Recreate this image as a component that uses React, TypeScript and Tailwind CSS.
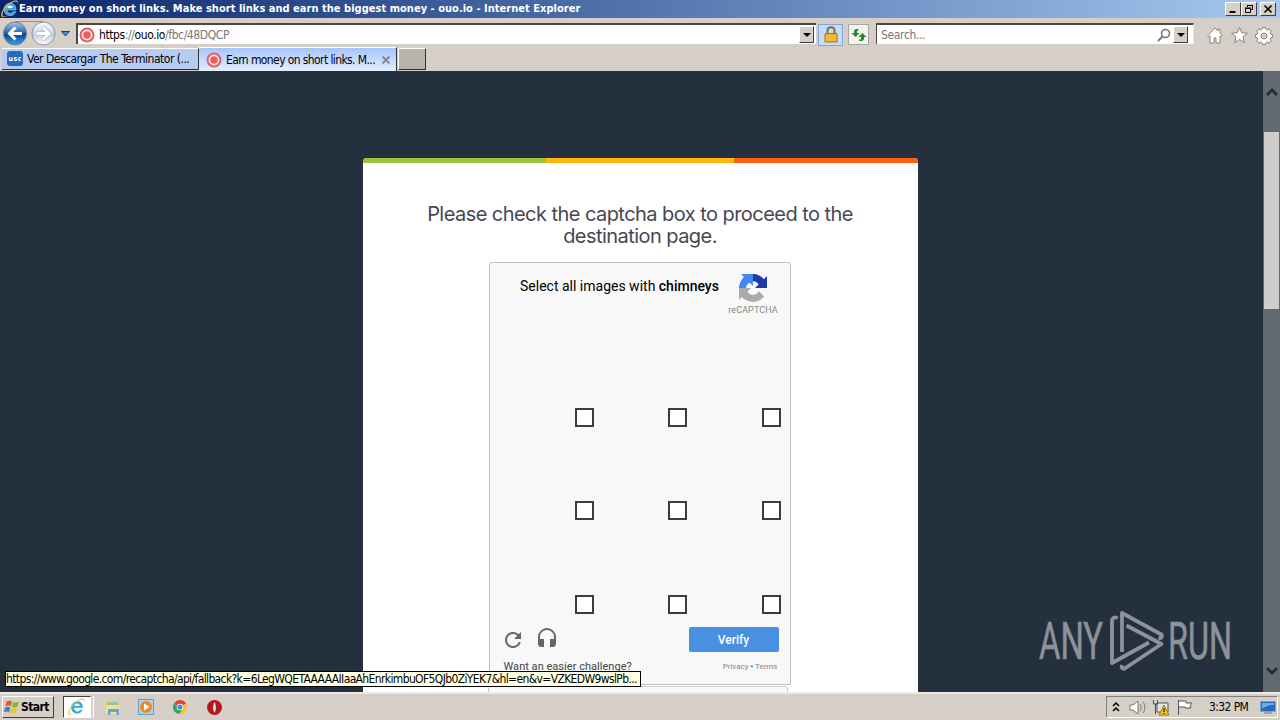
import type { ReactNode } from 'react';
import { MdHeadset, MdRefresh } from 'react-icons/md';

const cells = [1, 2, 3, 4, 5, 6, 7, 8, 9];

function IeLogo({ className }: { className?: string }) {
  return (
    <svg viewBox="0 0 20 20" className={className}>
      <path d="M16.6 11.2H6.8c.2 4 4.8 4.8 6.4 1.8h3.1c-1.2 3.3-3.5 4.4-6 4.4-4 0-6.9-2.8-6.9-6.8 0-4.2 3-7 6.8-7 4.2 0 6.8 3 6.4 7.6z" fill="#35a5e8" stroke="#d7f1ff" strokeWidth=".5" />
      <path d="M7 8.8h6.2c-.3-3.4-5.8-3.6-6.2 0z" fill="#eaf6ff" />
      <path d="M2.6 18.4C-.4 16 4 8.200 10.500 4c4.500-3 9-3.400 7.500 1.600 3-6.800-3.500-5.600-8.800-2C2.500 8-1.800 17 1.200 18.700c2 1.100 4.600-.4 6.200-1.500-2 .9-3.700 1.600-4.800 1.200z" fill="#f2c62b" />
    </svg>
  );
}

function OuoIcon() {
  return (
    <svg viewBox="0 0 16 16" className="h-4 w-4 shrink-0">
      <circle cx="8" cy="8" r="7.500" fill="#e95f63" />
      <circle cx="8" cy="8" r="4.600" fill="none" stroke="#fbe9e9" strokeWidth="1.700" />
    </svg>
  );
}

function WindowButton({ children }: { children: ReactNode }) {
  return (
    <button type="button" className="flex h-[14px] w-4 items-center justify-center border border-t-white border-r-[#404040] border-b-[#404040] border-l-white bg-[#d4d0c8]">
      <svg viewBox="0 0 12 12" className="h-3 w-3 shrink-0" fill="none" stroke="#000">
        {children}
      </svg>
    </button>
  );
}

function DropButton() {
  return (
    <button type="button" className="flex h-[17px] w-[15px] shrink-0 items-center justify-center border border-t-white border-r-[#404040] border-b-[#404040] border-l-white bg-[#d4d0c8]">
      <svg viewBox="0 0 8 4" className="h-1 w-2"><path d="M0 0h8L4 4z" /></svg>
    </button>
  );
}

function TitleBar() {
  return (
    <div className="flex h-[18px] items-center bg-linear-to-r from-[#0a246a] to-[#a6caf0] pr-1 pl-px">
      <IeLogo className="h-[18px] w-[18px]" />
      <span className="text-[11px] leading-[18px] font-bold tracking-[0.025px] whitespace-nowrap text-white">
        Earn money on short links. Make short links and earn the biggest money - ouo.io - Internet Explorer
      </span>
      <div className="ml-auto flex">
        <WindowButton><path d="M2.500 9h6" strokeWidth="2" /></WindowButton>
        <WindowButton>
          <path d="M4.500 4V2.500h5v4H8M4 2.500h6" />
          <path d="M2.500 5.500h5v4h-5zM2 5h6" />
        </WindowButton>
        <div className="ml-[3px]">
          <WindowButton><path d="M2.500 2.500l7 7M9.500 2.500l-7 7" strokeWidth="1.600" /></WindowButton>
        </div>
      </div>
    </div>
  );
}

function Toolbar() {
  return (
    <div className="flex h-[29px] items-center bg-[#d6cfc7]">
      <svg viewBox="0 0 75 29" className="h-[29px] w-[75px] shrink-0">
        <defs>
          <linearGradient id="back" x1="0" y1="0" x2="0" y2="1">
            <stop offset="0" stopColor="#a9c8ec" />
            <stop offset=".45" stopColor="#2c68b4" />
            <stop offset=".55" stopColor="#0d4597" />
            <stop offset="1" stopColor="#36a5ee" />
          </linearGradient>
          <linearGradient id="forward" x1="0" y1="0" x2="0" y2="1">
            <stop offset="0" stopColor="#fafcfe" />
            <stop offset=".55" stopColor="#c5d0dc" />
            <stop offset="1" stopColor="#fafcfe" />
          </linearGradient>
        </defs>
        <path d="M15 3.500h28" stroke="#9b9690" />
        <circle cx="15" cy="15.500" r="11.500" fill="url(#back)" stroke="#6f7f98" />
        <circle cx="43.500" cy="15.500" r="11.500" fill="url(#forward)" stroke="#8e949b" />
        <path d="M22 15.500H10M15.500 9.500l-6 6 6 6" fill="none" stroke="#fff" strokeWidth="3" />
        <path d="M36.500 15.500h12M43 9.500l6 6-6 6" fill="none" stroke="#a0a8b1" strokeWidth="4" />
        <path d="M36.500 15.500h12M43 9.500l6 6-6 6" fill="none" stroke="#fff" strokeWidth="3" />
        <path d="M61.500 13.500h8l-4 4.500z" fill="#4991cb" stroke="#173f72" />
      </svg>
      <div className="mt-0.5 ml-px flex h-[21px] w-[740px] shrink-0 items-center border-t-2 border-l-2 border-t-[#4b4642] border-l-[#4b4642] bg-white pl-px">
        <OuoIcon />
        <span className="ml-1 text-[12px] leading-4 tracking-[-0.4px] whitespace-nowrap text-[#777]">
          <span className="text-black">https</span>://<span className="text-black">ouo.io</span>/fbc/48DQCP
        </span>
        <div className="mr-0.5 ml-auto"><DropButton /></div>
      </div>
      <div className="mt-1 ml-0.5 flex h-[22px] w-[25px] shrink-0 items-center justify-center border border-[#7ea9dd] bg-[#c5dbf7]">
        <svg viewBox="0 0 14 17" className="h-[17px] w-[14px]">
          <path d="M3.500 8V4.500c0-4.500 7-4.500 7 0V8" fill="none" stroke="#807247" strokeWidth="2" />
          <path d="M1 7.500h12V16H1z" fill="#e9a91b" stroke="#b1790f" />
          <path d="M2 10h10M2 12h10M2 14h10" stroke="#f8d464" strokeWidth=".8" />
        </svg>
      </div>
      <div className="mt-1 ml-[5px] flex h-[21px] w-[21px] shrink-0 items-center justify-center border border-[#a8a6a2] bg-[#f2f3f1]">
        <svg viewBox="0 0 16 14" className="h-[14px] w-4 shrink-0" fill="#238a2a">
          <path d="M7.500 1v1.500H6V5h2.500L4.500 9 .5 5H3V3.500C3 2 4 1 5.500 1z" />
          <path d="M8 13v-1.500h2V9H7.500l4-4 4 4H13v1.500c0 1.500-1 2.500-2.500 2.500z" />
        </svg>
      </div>
      <div className="mt-0.5 ml-[7px] flex h-[21px] w-[318px] shrink-0 items-center border-t-2 border-r border-l border-t-[#4b4642] border-r-[#e8e4df] border-l-[#4b4642] bg-white pl-1">
        <span className="text-[12px] leading-4 tracking-[-0.35px] text-[#777]">Search...</span>
        <svg viewBox="0 0 14 14" className="mr-0.5 ml-auto h-[14px] w-[14px]" fill="none" stroke="#777">
          <circle cx="8.500" cy="5.500" r="4" strokeWidth="1.600" />
          <path d="M5.500 8.500L1 13" strokeWidth="2" />
        </svg>
        <div className="mr-[5px]"><DropButton /></div>
      </div>
      <svg viewBox="0 0 70 20" className="mt-1.5 ml-[13px] h-5 w-[70px] shrink-0" fill="#fff" stroke="#898581">
        <path d="M.8 9.500L8 2l3 3V3h2v4l2.500 2.500-1.300 1.200-1.200-1V17h-4v-5H7v5H3V9.700l-1 1z" />
        <path d="M32.500 1.500l2.200 5.200 5.600.5-4.300 3.700 1.300 5.600-4.800-3-4.800 3 1.300-5.600-4.300-3.700 5.600-.5z" />
        <path fillRule="evenodd" d="M55.500 1.500h3l.5 2 1.300.5 1.800-1.100 2.100 2.100-1.100 1.800.5 1.300 2 .5v2.800l-2 .5-.5 1.300 1.100 1.800-2.100 2.100-1.800-1.100-1.300.5-.5 2h-3l-.5-2-1.300-.5-1.800 1.100-2.100-2.100 1.100-1.800-.5-1.300-2-.5V8.600l2-.5.5-1.300L49.800 5l2.100-2.100L53.700 4l1.300-.5zM57 7a3 3 0 100 6 3 3 0 000-6z" />
      </svg>
    </div>
  );
}

function TabBar() {
  return (
    <div className="flex h-6 items-start bg-[#d6cfc7] pl-0.5">
      <div className="mt-px flex h-[22px] w-[197px] items-center border-t border-r border-b border-t-white border-r-[#303030] border-b-[#303030] bg-[#b7caf0] pl-[5px]">
        <svg viewBox="0 0 16 16" className="h-4 w-4 shrink-0">
          <rect width="16" height="15" rx="3" fill="#286bb9" />
          <text x="8" y="10" textAnchor="middle" fontSize="7" fontWeight="bold" fill="#fff" textLength="13">usc</text>
        </svg>
        <span className="ml-1 text-[12px] tracking-[-0.5px] whitespace-nowrap">Ver Descargar The Terminator (...</span>
      </div>
      <div className="flex h-6 w-[198px] items-center border-t border-r border-t-white border-r-[#303030] bg-linear-to-b from-[#a6c4fb] to-[#e4eefe] pl-[7px]">
        <OuoIcon />
        <span className="ml-1 text-[12px] tracking-[-0.6px] whitespace-nowrap">Earn money on short links. M...</span>
        <svg viewBox="0 0 8 8" className="mr-1.5 ml-auto h-2 w-2 shrink-0" stroke="#828994" strokeWidth="2"><path d="M.5.5l7 7M7.500.5l-7 7" /></svg>
      </div>
      <div className="mt-px ml-px h-[22px] w-7 border border-t-white border-r-[#303030] border-b-[#303030] border-l-white bg-[#bab3ac]" />
    </div>
  );
}

function RecaptchaLogo() {
  return (
    <svg viewBox="0 0 64 64" className="h-7 w-7">
      <path fill="#1c3aa9" d="M64 31.955l-.033-1.370V4.687l-7.160 7.160C50.948 4.674 42.033.093 32.050.093c-10.400 0-19.622 4.960-25.458 12.640l11.736 11.860a15.550 15.550 0 0 1 4.754-5.334c2.050-1.600 4.952-2.906 8.968-2.906.485 0 .860.057 1.135.163 4.976.393 9.288 3.140 11.828 7.124l-8.307 8.307L64 31.953" />
      <path fill="#4285f4" d="M31.862.094l-1.370.033H4.594l7.160 7.160C4.580 13.147 0 22.060 0 32.046c0 10.400 4.960 19.622 12.640 25.458L24.500 45.768a15.550 15.550 0 0 1-5.334-4.754c-1.600-2.050-2.906-4.952-2.906-8.968 0-.485.057-.860.163-1.135.393-4.976 3.140-9.288 7.124-11.828l8.307 8.307L31.860.095" />
      <path fill="#ababab" d="M.001 32.045l.033 1.370v25.898l7.160-7.160c5.860 7.173 14.774 11.754 24.760 11.754 10.400 0 19.622-4.960 25.458-12.640l-11.736-11.860a15.550 15.550 0 0 1-4.754 5.334c-2.050 1.600-4.952 2.906-8.968 2.906-.485 0-.860-.057-1.135-.163-4.976-.393-9.288-3.140-11.828-7.124l8.307-8.307c-10.522.040-22.400.066-27.295-.005" />
    </svg>
  );
}

function Captcha() {
  return (
    <div className="mt-[15px] ml-[126px] h-[423px] w-[302px] shrink-0 rounded-t-[3px] border border-[#bfbfbf] bg-[#f8f8f8] font-['Roboto',sans-serif]">
      <div className="flex h-[71px] pl-[30.5px]">
        <p className="mt-[13px] w-[200px] text-[14px] leading-5 whitespace-nowrap text-black">
          Select all images with <span className="font-medium">chimneys</span>
        </p>
        <div className="ml-1.5 flex w-[54px] flex-col items-center pt-[11px]">
          <RecaptchaLogo />
          <span className="mt-0.5 text-[9px] leading-3 tracking-[0.1px] whitespace-nowrap text-[#888]">reCAPTCHA</span>
        </div>
      </div>
      <div className="ml-[11px] grid h-[280px] w-[280px] grid-cols-3 grid-rows-[93px_93px_94px]">
        {cells.map((cell) => (
          <label key={cell} className="flex items-end justify-end">
            <span className="h-[19px] w-[19px] border-2 border-[#3c3c3c] bg-white" />
          </label>
        ))}
      </div>
      <div className="mt-[13px] flex h-[25px] pr-[11px] pl-[11px] text-[#666]">
        <MdRefresh className="mt-px h-6 w-6" />
        <MdHeadset className="ml-2.5 h-6 w-6" />
        <button type="button" className="ml-auto h-[25px] w-[90px] rounded-[2px] bg-[#4a90e2] text-[12px] font-medium text-white">
          Verify
        </button>
      </div>
      <div className="mt-[7px] flex items-center justify-between pr-3 pl-3.5">
        <span className="text-[11px] leading-4 tracking-[0.03px] text-[#444]">Want an easier challenge?</span>
        <span className="text-[8px] leading-4 text-[#888]">Privacy <span className="text-black">•</span> Terms</span>
      </div>
    </div>
  );
}

function Watermark() {
  return (
    <svg viewBox="0 0 204 64" className="absolute right-[38px] bottom-[19px] h-16 w-[204px] font-['Roboto',sans-serif]" fill="#8c929b">
      <g fontSize="52" stroke="#8c929b" strokeWidth=".6">
        <text x="1" y="50" textLength="64" lengthAdjust="spacingAndGlyphs">ANY</text>
        <text x="130" y="50" textLength="64" lengthAdjust="spacingAndGlyphs">RUN</text>
      </g>
      <g fill="none" stroke="#8c929b" strokeWidth="3.800" strokeLinejoin="round">
        <path d="M79.500 9.500C77 7 74 9 74 12.500V54l37-20.500" />
        <path d="M84 43V4l38.500 21c2.500 1.500 1 5-2 3.500" />
        <path d="M88.500 16.500l35 18.500-36 24c-2.500 1.500-4.500 0-3.500-3" />
      </g>
    </svg>
  );
}

function Scrollbar() {
  return (
    <div className="flex w-[17px] shrink-0 flex-col items-center bg-[#626a71]">
      <svg viewBox="0 0 12 8" className="mt-[17px] h-2 w-3" fill="none" stroke="#222d39" strokeWidth="2.800"><path d="M1 7l5-5 5 5" /></svg>
      <div className="mt-9 h-[177px] w-[15px] bg-[#cdcdcd]" />
      <svg viewBox="0 0 12 8" className="mt-auto mb-[17px] h-2 w-3" fill="none" stroke="#222d39" strokeWidth="2.800"><path d="M1 1l5 5 5-5" /></svg>
    </div>
  );
}

function Page() {
  return (
    <main className="relative flex h-[621px] overflow-hidden bg-[#25303e]">
      <div className="flex flex-1 justify-center pt-[87px] pl-[17px]">
        <section className="flex h-[534px] w-[555px] flex-col overflow-hidden rounded-t-[4px] bg-white">
          <div className="flex h-[5px] shrink-0">
            <div className="w-[183px] bg-[#9bc53d]" />
            <div className="w-[188px] bg-[#ffb60f]" />
            <div className="flex-1 bg-[#fb5f10]" />
          </div>
          <h1 className="mt-10 h-11 shrink-0 text-center font-['Inter',sans-serif] text-[20px] leading-[22px] tracking-[-0.55px] whitespace-nowrap text-[#474754]">
            Please check the captcha box to proceed to the
            <br />
            destination page.
          </h1>
          <Captcha />
          <div className="mt-px ml-[125px] h-2 w-[300px] shrink-0 rounded-t-[3px] border border-[#c8c8c8] bg-[#fafafa]" />
        </section>
      </div>
      <Scrollbar />
      <Watermark />
      <div className="absolute bottom-[5px] left-[5px] h-4 w-[636px] border border-black bg-[#ffffe1] text-[12px] leading-[14px] tracking-[-0.63px] whitespace-nowrap">
        https://www.google.com/recaptcha/api/fallback?k=6LegWQETAAAAAIIaaAhEnrkimbuOF5QJb0ZiYEK7&amp;hl=en&amp;v=VZKEDW9wslPb...
      </div>
    </main>
  );
}

function Taskbar() {
  return (
    <footer className="flex h-7 items-center border-t-2 border-[#ede9e4] bg-[#d6cfc7]">
      <button type="button" className="ml-0.5 flex h-[22px] w-[52px] shrink-0 items-center border border-t-white border-r-[#404040] border-b-[#404040] border-l-white pl-px text-[12px] font-bold tracking-[-0.6px]">
        <svg viewBox="0 0 16 16" className="mr-px h-4 w-4 shrink-0">
          <path d="M2.500 2.500c2-1.300 3.500-1 5.500 0L6.700 7.300c-2-1-3.500-1-5.400.1z" fill="#e95b2a" />
          <path d="M9 3c2 1 3.800.8 6-.4l-1.500 5c-2 1.200-3.600 1.200-5.600.3z" fill="#7cb934" />
          <path d="M1 8.500c2-1.200 3.500-1 5.400-.1L5 13.200c-2-1-3.400-1-5.200 0z" fill="#3583cf" />
          <path d="M7.500 9c2 1 3.500.9 5.600-.3l-1.400 4.700c-2 1.200-3.600 1.200-5.500.3z" fill="#f2c21e" />
        </svg>
        Start
      </button>
      <div className="ml-[9px] flex h-[22px] w-[28px] shrink-0 items-center justify-center border border-t-[#404040] border-r-white border-b-white border-l-[#404040] bg-white">
        <IeLogo className="h-[18px] w-[18px]" />
      </div>
      <div className="h-[22px] w-[3px] shrink-0 border-r border-white" />
      <svg viewBox="0 0 18 18" className="ml-2.5 h-[18px] w-[18px] shrink-0">
        <path d="M1 2h6l1 2h8v11H1z" fill="#ead17b" />
        <path d="M3 4h11v4H3z" fill="#8fc7ab" />
        <path d="M2 7h14v9H2z" fill="#f4df91" />
        <path d="M4 17v-6h11v6h-2.500v-3h-6v3z" fill="#5ba9db" />
      </svg>
      <svg viewBox="0 0 16 16" className="ml-4 h-4 w-4 shrink-0">
        <path d="M.5.5h15v15H.5z" fill="#acd2ef" stroke="#679bcc" />
        <circle cx="8" cy="8" r="6" fill="#f28a18" />
        <path d="M6 4.500v7L11.500 8z" fill="#fff" />
      </svg>
      <svg viewBox="0 0 16 16" className="ml-[19px] h-[14px] w-[14px] shrink-0">
        <circle cx="8" cy="8" r="8" fill="#f4c62b" />
        <path d="M8 8L1.100 4A8 8 0 0115 4z" fill="#dc4436" />
        <path d="M8 8L1.100 4A8 8 0 007 16l4-6z" fill="#39a55b" />
        <circle cx="8" cy="8" r="3.700" fill="#fff" />
        <circle cx="8" cy="8" r="2.900" fill="#4786df" />
      </svg>
      <svg viewBox="0 0 16 16" className="ml-5 h-[15px] w-[15px] shrink-0">
        <circle cx="8" cy="8" r="8" fill="#bd141c" />
        <ellipse cx="8" cy="8" rx="2" ry="5.700" fill="#f2e6e4" stroke="#79131a" />
      </svg>
      <div className="mr-0.5 ml-auto flex h-[22px] w-[172px] items-center border border-t-[#808080] border-r-white border-b-white border-l-[#808080]">
        <svg viewBox="0 0 90 18" className="h-[18px] w-[90px] shrink-0">
          <path d="M6 8l3-3 3 3M6 13l3-3 3 3" fill="none" stroke="#000" strokeWidth="1.500" />
          <path d="M23 7h3l5-4v13l-5-4h-3z" fill="#fff" stroke="#777" />
          <path d="M33 6c1.500 2 1.500 5 0 7M36 4c2.500 3 2.500 8 0 11" fill="none" stroke="#777" />
          <path d="M50 5h11v9H50z" fill="#e1e4e7" stroke="#565656" />
          <path d="M46.500 2v4h4V2M48.500 6v10" fill="none" stroke="#4d4d4d" />
          <path d="M57 7l5 10H52z" fill="#f2c51c" stroke="#a87b10" />
          <path d="M57 10v4M57 15v1" stroke="#000" />
          <path d="M71.500 2v15M72 3h7v2h6l-2 3 1 2h-6V9h-6" fill="#fff" stroke="#555" />
        </svg>
        <span className="ml-3 text-[12px] tracking-[-0.6px] whitespace-nowrap">3:32 PM</span>
        <svg viewBox="0 0 16 14" className="mr-px ml-auto h-[14px] w-4">
          <path d="M.5 1.500h15v10H.5z" fill="#236bc0" stroke="#77a7d5" />
          <path d="M2 3h12v2C8 5 5 7 2 9z" fill="#72abe4" />
          <path d="M4 13h8" stroke="#777" />
        </svg>
      </div>
    </footer>
  );
}

export default function App() {
  return (
    <div className="h-[720px] w-[1280px] overflow-hidden font-['DejaVu_Sans_Condensed','DejaVu_Sans',sans-serif] text-black">
      <TitleBar />
      <Toolbar />
      <TabBar />
      <Page />
      <Taskbar />
    </div>
  );
}
